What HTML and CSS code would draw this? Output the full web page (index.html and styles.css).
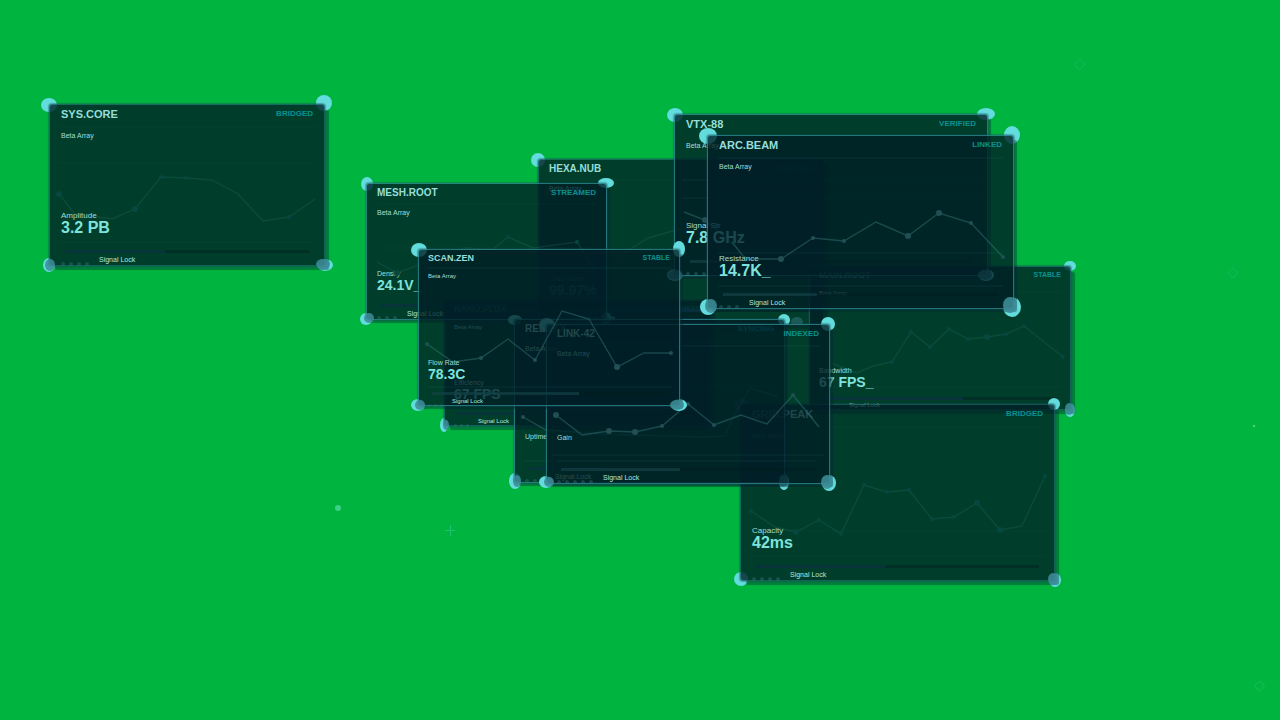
FILE: index.html
```html
<!DOCTYPE html>
<html lang="en">
<head>
    <meta charset="UTF-8">
    <title>Signal panels</title>
    <link rel="stylesheet" href="styles.css">
</head>
<body>
<main id="space">
    <svg class="particles" width="1280" height="720" viewBox="0 0 1280 720" aria-hidden="true">
        <circle cx="338" cy="508" r="3" fill="#3ccf86"/>
        <path d="M445 530.5h10M450.5 525v11" stroke="#1fc070"/>
        <path d="M1079.500 59l5.500 5.500-5.500 5.500-5.500-5.500z" stroke="#10ba5c"/>
        <path d="M1233 268l5 5-5 5-5-5z" stroke="#10ba5c"/>
        <path d="M1259.500 681l5 5-5 5-5-5z" stroke="#1bbf5c"/>
        <circle cx="1254" cy="426" r="1.300" fill="#45cc78"/>
    </svg>

    <section class="panel lg" id="sys">
        <svg class="pins" viewBox="50 105 274 160">
            <ellipse cx="49" cy="105" rx="8" ry="7"/><ellipse cx="324" cy="103" rx="8" ry="8"/>
            <ellipse cx="49" cy="265" rx="6" ry="7"/><ellipse cx="325" cy="265" rx="8" ry="6"/>
        </svg>
        <div class="face">
            <svg class="chart dim" viewBox="50 105 274 160">
                <path class="grid" d="M58 127H316M58 163H316M58 242H316"/>
                <polyline points="59,194 75,214 112,219 135,209 161,177 186,178 212,180 238,194 263,221 289,217 315,199"/>
                <circle cx="59" cy="194" r="3"/><circle cx="135" cy="209" r="3"/><circle cx="161" cy="177" r="2"/><circle cx="186" cy="178" r="2"/><circle cx="289" cy="217" r="2"/>
                <ellipse class="cap" cx="50" cy="265" rx="5" ry="6"/><ellipse class="cap" cx="323" cy="264" rx="7" ry="5"/>
            </svg>
            <header><h2>SYS.CORE</h2><span class="status">BRIDGED</span></header>
            <p class="sub">Beta Array</p>
            <p class="label">Amplitude</p>
            <p class="value">3.2 PB</p>
            <div class="bar"><i style="width:41%"></i></div>
            <footer><b></b><b></b><b></b><b></b><span>Signal Lock</span></footer>
        </div>
    </section>

    <section class="panel sm" id="nano">
        <svg class="pins" viewBox="445 301 265 124">
            <ellipse cx="444" cy="425" rx="4" ry="7"/><ellipse cx="710" cy="425" rx="5" ry="6"/>
        </svg>
        <div class="face">
            <svg class="chart dim" viewBox="445 301 265 124">
                <path class="grid" d="M453 318H702M453 386H702"/>
                <ellipse class="cap" cx="446" cy="425" rx="3" ry="5"/>
            </svg>
            <header><h2>NANO.FLUX</h2><span class="status">LINKED</span></header>
            <p class="sub">Beta Array</p>
            <p class="label">Efficiency</p>
            <p class="value">67 FPS</p>
            <div class="bar"><i style="width:40%"></i></div>
            <footer><b></b><b></b><b></b><span>Signal Lock</span></footer>
        </div>
    </section>

    <section class="panel md" id="hexa">
        <svg class="pins" viewBox="539 160 284 164">
            <ellipse cx="538" cy="160" rx="7" ry="7"/>
        </svg>
        <div class="face">
            <svg class="chart dim" viewBox="539 160 284 164">
                <path class="grid" d="M547 180H815M547 270H815"/>
                <polyline points="618,257 648,238 680,229 735,236 768,226 788,215 810,193"/>
                <circle cx="810" cy="193" r="2"/>
            </svg>
            <header><h2>HEXA.NUB</h2><span class="status">VERIFIED</span></header>
            <p class="sub">Beta Array</p>
            <p class="label">Load Index</p>
            <p class="value">99.97%</p>
            <div class="bar"><i style="width:60%"></i></div>
            <footer><b></b><b></b><b></b><span>Signal Lock</span></footer>
        </div>
    </section>

    <section class="panel sm" id="root">
        <svg class="pins" viewBox="810 267 260 142">
            <ellipse cx="1070" cy="266" rx="6" ry="5"/><ellipse cx="1070" cy="410" rx="5" ry="7"/>
            <ellipse class="faded" cx="797" cy="322" rx="6" ry="5"/>
        </svg>
        <div class="face">
            <svg class="chart dim" viewBox="810 267 260 142">
                <path class="grid" d="M818 292H1062M818 387H1062"/>
                <polyline points="833,364 857,373 873,366 892,362 911,332 930,347 949,329 968,339 987,337 1006,334 1024,326 1063,357"/>
                <circle cx="892" cy="362" r="2"/><circle cx="911" cy="332" r="2"/><circle cx="930" cy="347" r="2"/><circle cx="949" cy="329" r="2"/><circle cx="968" cy="339" r="2"/><circle cx="987" cy="337" r="3"/><circle cx="1006" cy="334" r="2"/><circle cx="1024" cy="326" r="2"/><circle cx="1063" cy="357" r="2"/>
                <ellipse class="cap" cx="1069" cy="409" rx="4" ry="6"/>
            </svg>
            <header><h2>MAIN.ROOT</h2><span class="status">STABLE</span></header>
            <p class="sub">Beta Array</p>
            <p class="label">Bandwidth</p>
            <p class="value">67 FPS_</p>
            <div class="bar"><i style="width:60%"></i></div>
            <footer><b></b><b></b><b></b><b></b><span>Signal Lock</span></footer>
        </div>
    </section>

    <section class="panel lg" id="grid">
        <svg class="pins" viewBox="741 405 313 175">
            <ellipse cx="741" cy="405" rx="7" ry="6"/><ellipse cx="1054" cy="404" rx="6" ry="6"/>
            <ellipse cx="741" cy="579" rx="7" ry="7"/><ellipse cx="1055" cy="580" rx="6" ry="7"/>
        </svg>
        <div class="face">
            <svg class="chart dim" viewBox="741 405 313 175">
                <path class="grid" d="M750 427H1045M750 531H1050M750 556H1045"/>
                <polyline points="751,511 775,527 796,532 819,520 841,534 864,485 887,492 909,490 932,519 954,517 977,503 1000,530 1022,526 1045,476"/>
                <circle cx="751" cy="511" r="2"/><circle cx="796" cy="532" r="3"/><circle cx="819" cy="520" r="2"/><circle cx="841" cy="534" r="2"/><circle cx="864" cy="485" r="2"/><circle cx="887" cy="492" r="2"/><circle cx="909" cy="490" r="2"/><circle cx="932" cy="519" r="2"/><circle cx="954" cy="517" r="2"/><circle cx="977" cy="503" r="3"/><circle cx="1000" cy="530" r="3"/><circle cx="1045" cy="476" r="2"/>
                <ellipse class="cap" cx="1053" cy="579" rx="5" ry="6"/>
            </svg>
            <header><h2>GRID.PEAK</h2><span class="status">BRIDGED</span></header>
            <p class="sub">Beta Array</p>
            <p class="label">Capacity</p>
            <p class="value">42ms</p>
            <div class="bar"><i style="width:46%"></i></div>
            <footer><b></b><b></b><b></b><b></b><span>Signal Lock</span></footer>
        </div>
    </section>

    <section class="panel lg" id="vtx">
        <svg class="pins" viewBox="675 115 312 160">
            <ellipse cx="675" cy="115" rx="8" ry="7"/><ellipse cx="986" cy="114" rx="9" ry="6"/>
            <ellipse cx="675" cy="275" rx="8" ry="6"/><ellipse cx="986" cy="275" rx="8" ry="6"/>
        </svg>
        <div class="face">
            <svg class="chart" viewBox="675 115 312 160">
                <path class="grid" d="M682 180H980M682 198H980"/>
                <polyline points="684,212 705,220 737,248"/>
                <circle cx="705" cy="220" r="3"/>
                <ellipse class="cap" cx="675" cy="275" rx="7" ry="5"/><ellipse class="cap" cx="985" cy="275" rx="7" ry="5"/>
            </svg>
            <header><h2>VTX-88</h2><span class="status">VERIFIED</span></header>
            <p class="sub">Beta Array</p>
            <p class="label">Signal Str</p>
            <p class="value">7.8 GHz</p>
            <div class="bar"><i style="width:20%"></i></div>
            <footer><b></b><b></b><b></b><span></span></footer>
        </div>
    </section>

    <section class="panel md" id="mesh">
        <svg class="pins" viewBox="367 184 239 135">
            <ellipse cx="367" cy="184" rx="6" ry="7"/><ellipse cx="606" cy="183" rx="8" ry="5"/>
            <ellipse cx="366" cy="319" rx="6" ry="6"/><ellipse cx="606" cy="318" rx="5" ry="6"/>
        </svg>
        <div class="face">
            <svg class="chart dim" viewBox="367 184 239 135">
                <path class="grid" d="M377 204H596M377 248H596"/>
                <polyline points="377,262 397,273 465,248 492,250 508,237 533,248 577,242 595,270"/>
                <circle cx="397" cy="273" r="3"/><circle cx="508" cy="237" r="2"/><circle cx="577" cy="242" r="2"/>
                <ellipse class="cap" cx="369" cy="318" rx="5" ry="5"/>
            </svg>
            <header><h2>MESH.ROOT</h2><span class="status">STREAMED</span></header>
            <p class="sub">Beta Array</p>
            <p class="label">Density</p>
            <p class="value">24.1V_</p>
            <div class="bar"><i style="width:60%"></i></div>
            <footer><b></b><b></b><b></b><span>Signal Lock</span></footer>
        </div>
    </section>

    <section class="panel md" id="relay">
        <svg class="pins" viewBox="515 320 269 162">
            <ellipse cx="515" cy="320" rx="7" ry="5"/><ellipse cx="784" cy="320" rx="6" ry="6"/>
            <ellipse cx="515" cy="481" rx="6" ry="8"/><ellipse cx="784" cy="482" rx="5" ry="8"/>
        </svg>
        <div class="face">
            <svg class="chart" viewBox="515 320 269 162">
                <path class="grid" d="M523 343H776M523 386H776M523 461H776"/>
                <polyline points="523,417 546,430 600,434 703,437 725,436 733,418 750,388 778,397"/>
                <circle cx="523" cy="417" r="2"/>
                <ellipse class="cap" cx="517" cy="481" rx="4" ry="6"/><ellipse class="cap" cx="783" cy="481" rx="4" ry="6"/>
            </svg>
            <header><h2>RELAY.X</h2><span class="status">SYNCING</span></header>
            <p class="sub">Beta Array</p>
            <p class="label">Uptime</p>
            <p class="value"></p>
            <div class="bar"><i style="width:30%"></i></div>
            <footer><b></b><b></b><b></b><span>Signal Lock</span></footer>
        </div>
    </section>

    <section class="panel md" id="link">
        <svg class="pins" viewBox="547 325 282 158">
            <ellipse cx="547" cy="325" rx="8" ry="7"/><ellipse cx="828" cy="324" rx="7" ry="7"/>
            <ellipse cx="546" cy="482" rx="7" ry="6"/><ellipse cx="829" cy="483" rx="7" ry="8"/>
        </svg>
        <div class="face">
            <svg class="chart" viewBox="547 325 282 158">
                <path class="grid" d="M555 346H821M552 455H824M557 461H815"/>
                <polyline points="556,415 582,435 609,431 635,432 662,426 688,404 714,425 741,415 767,424 793,395 819,427"/>
                <circle cx="556" cy="415" r="3"/><circle cx="609" cy="431" r="3"/><circle cx="635" cy="432" r="3"/><circle cx="662" cy="426" r="2"/><circle cx="688" cy="404" r="2"/><circle cx="714" cy="425" r="2"/><circle cx="793" cy="395" r="2"/>
                <ellipse class="cap" cx="549" cy="482" rx="5" ry="5"/><ellipse class="cap" cx="827" cy="482" rx="6" ry="7"/>
            </svg>
            <header><h2>LINK-42</h2><span class="status">INDEXED</span></header>
            <p class="sub">Beta Array</p>
            <p class="label">Gain</p>
            <p class="value"></p>
            <div class="bar"><i style="width:47%"></i></div>
            <footer><b></b><b></b><b></b><b></b><b></b><span>Signal Lock</span></footer>
        </div>
    </section>

    <section class="panel lg" id="arc">
        <svg class="pins" viewBox="708 136 305 172">
            <ellipse cx="708" cy="136" rx="9" ry="8"/><ellipse cx="1012" cy="135" rx="8" ry="9"/>
            <ellipse cx="708" cy="307" rx="8" ry="8"/><ellipse cx="1012" cy="307" rx="9" ry="10"/>
        </svg>
        <div class="face">
            <svg class="chart" viewBox="708 136 305 172">
                <path class="grid" d="M718 158H1003M718 253H1003M718 286H1003"/>
                <polyline points="732,242 743,256 749,259 781,259 813,238 844,241 876,222 908,236 939,213 971,223 1003,257"/>
                <circle cx="781" cy="259" r="3"/><circle cx="813" cy="238" r="2"/><circle cx="844" cy="241" r="2"/><circle cx="908" cy="236" r="3"/><circle cx="939" cy="213" r="3"/><circle cx="971" cy="223" r="2"/><circle cx="1003" cy="257" r="2"/>
                <ellipse class="cap" cx="711" cy="306" rx="6" ry="7"/><ellipse class="cap" cx="1010" cy="305" rx="7" ry="8"/>
            </svg>
            <header><h2>ARC.BEAM</h2><span class="status">LINKED</span></header>
            <p class="sub">Beta Array</p>
            <p class="label">Resistance</p>
            <p class="value">14.7K_</p>
            <div class="bar"><i style="width:34%"></i></div>
            <footer><b></b><b></b><b></b><span>Signal Lock</span></footer>
        </div>
    </section>

    <section class="panel sm" id="scan">
        <svg class="pins" viewBox="419 250 260 155">
            <ellipse cx="419" cy="250" rx="8" ry="7"/><ellipse cx="679" cy="249" rx="6" ry="8"/>
            <ellipse cx="418" cy="405" rx="7" ry="6"/><ellipse cx="679" cy="405" rx="8" ry="6"/>
        </svg>
        <div class="face">
            <svg class="chart" viewBox="419 250 260 155">
                <path class="grid" d="M427 268H671M427 387H671"/>
                <polyline points="427,344 453,362 481,358 508,339 535,360 562,311 589,319 617,367 644,353 671,353"/>
                <circle cx="427" cy="344" r="2"/><circle cx="481" cy="358" r="2"/><circle cx="535" cy="360" r="2"/><circle cx="617" cy="367" r="3"/><circle cx="671" cy="353" r="2"/>
                <ellipse class="cap" cx="420" cy="405" rx="5" ry="5"/><ellipse class="cap" cx="677" cy="405" rx="7" ry="5"/>
            </svg>
            <header><h2>SCAN.ZEN</h2><span class="status">STABLE</span></header>
            <p class="sub">Beta Array</p>
            <p class="label">Flow Rate</p>
            <p class="value">78.3C</p>
            <div class="bar"><i style="width:63%"></i></div>
            <footer><b></b><b></b><b></b><span>Signal Lock</span></footer>
        </div>
    </section>
</main>
</body>
</html>
```
FILE: styles.css
```css
*{
    margin: 0;
    padding: 0;
    box-sizing: border-box;
}
body{
    background: #00b440;
    font-family: "Liberation Sans", Arial, sans-serif;
    color: #a5dfd6;
}
#space{
    position: relative;
    min-height: 100vh;
    overflow: hidden;
}
.particles{
    position: absolute;
    top: 0;
    left: 0;
    fill: none;
}

/* panels float freely over the space */
.panel{
    position: absolute;
}
#sys{ left: 50px; top: 105px; width: 274px; height: 160px; }
#hexa{ left: 539px; top: 160px; width: 284px; height: 164px; }
#nano{ left: 445px; top: 301px; width: 265px; height: 124px; }
#root{ left: 810px; top: 267px; width: 260px; height: 142px; }
#grid{ left: 741px; top: 405px; width: 313px; height: 175px; }
#vtx{ left: 675px; top: 115px; width: 312px; height: 160px; }
#mesh{ left: 367px; top: 184px; width: 239px; height: 135px; }
#relay{ left: 515px; top: 320px; width: 269px; height: 162px; }
#link{ left: 547px; top: 325px; width: 282px; height: 158px; }
#arc{ left: 708px; top: 136px; width: 305px; height: 172px; }
#scan{ left: 419px; top: 250px; width: 260px; height: 155px; }

.pins, .chart{
    position: absolute;
    inset: 0;
    width: 100%;
    height: 100%;
    overflow: visible;
}
.pins{
    fill: #62dcdc;
}
.pins .faded{
    fill: #1c5a58;
}
.face{
    position: relative;
    height: 100%;
    display: flex;
    flex-direction: column;
    background: rgba(0, 31, 38, .79);
    box-shadow: 0 0 0 1px rgba(28, 92, 100, .65), 0 0 1px 2px rgba(20, 80, 90, .4), 5px 5px 1px rgba(0, 36, 50, .38);
    border-radius: 2px;
}
#vtx .face, #mesh .face, #relay .face, #link .face, #arc .face, #scan .face{
    box-shadow: 0 0 0 1px rgba(44, 130, 138, .8), 0 0 1px 2px rgba(20, 80, 90, .35), 4px 4px 1px rgba(0, 36, 50, .38);
}

.chart polyline, .chart .grid{
    fill: none;
    stroke: rgba(70, 145, 145, .36);
    stroke-width: 1.4;
}
.chart circle{
    fill: #214f54;
}
.chart .grid{
    stroke: rgba(60, 140, 140, .14);
    stroke-width: 1;
}
.chart.dim polyline{
    stroke: rgba(60, 130, 120, .2);
}
.chart.dim circle{
    fill: #064840;
}
.chart.dim .grid{
    stroke: rgba(60, 140, 120, .08);
}
.chart .cap{
    fill: rgba(60, 140, 150, .85);
}

header{
    display: flex;
    justify-content: space-between;
    line-height: 12px;
}
h2{
    font-size: inherit;
    color: #97ded7;
}
.status{
    font-weight: bold;
    color: #0b918f;
}
.sub{
    line-height: 10px;
}
.label{
    margin-top: auto;
}
.value{
    font-weight: bold;
    color: #7fe3dd;
}
.bar{
    height: 3px;
    background: rgba(0, 28, 32, .45);
}
.bar i{
    display: block;
    height: 100%;
    background: rgba(14, 60, 85, .45);
}
#link .bar i, #arc .bar i, #scan .bar i, #vtx .bar i{
    background: rgba(28, 85, 90, .45);
}
footer{
    display: flex;
    align-items: flex-end;
    line-height: 8px;
    height: 8px;
    color: #b4e8df;
}
footer b{
    width: 4px;
    height: 4px;
    margin-right: 4px;
    margin-bottom: -2px;
    border-radius: 50%;
    background: rgba(50, 120, 125, .4);
}
footer span{
    margin-left: 6px;
}

/* near */
.lg .face{ padding: 3px 11px 1px; }
.lg header{ font-size: 11px; }
.lg .status{ font-size: 8px; }
.lg .sub{ font-size: 7px; margin-top: 11px; }
.lg .label{ font-size: 8px; line-height: 8px; }
.lg .value{ font-size: 16px; line-height: 16px; }
.lg .bar{ margin: 14px 4px 3px; }
.lg footer{ font-size: 7px; }

/* middle */
.md .face{ padding: 3px 10px 1px; }
.md header{ font-size: 10px; }
.md .status{ font-size: 8px; }
.md .sub{ font-size: 7px; margin-top: 9px; }
.md .label{ font-size: 7px; line-height: 8px; }
.md .value{ font-size: 14px; line-height: 14px; min-height: 14px; }
.md .bar{ margin: 12px 4px 3px; }
.md footer{ font-size: 7px; }

/* far */
.sm .face{ padding: 2px 9px 0; }
.sm header{ font-size: 9px; }
.sm .status{ font-size: 7px; }
.sm .sub{ font-size: 6px; margin-top: 7px; }
.sm .label{ font-size: 7px; line-height: 8px; }
.sm .value{ font-size: 14px; line-height: 14px; }
.sm .bar{ margin: 11px 4px 2px; }
#root .bar{ margin: 8px 4px 1px; }
.sm footer{ font-size: 6px; }
.sm footer b{
    width: 3px;
    height: 3px;
    margin-right: 3px;
}
```
